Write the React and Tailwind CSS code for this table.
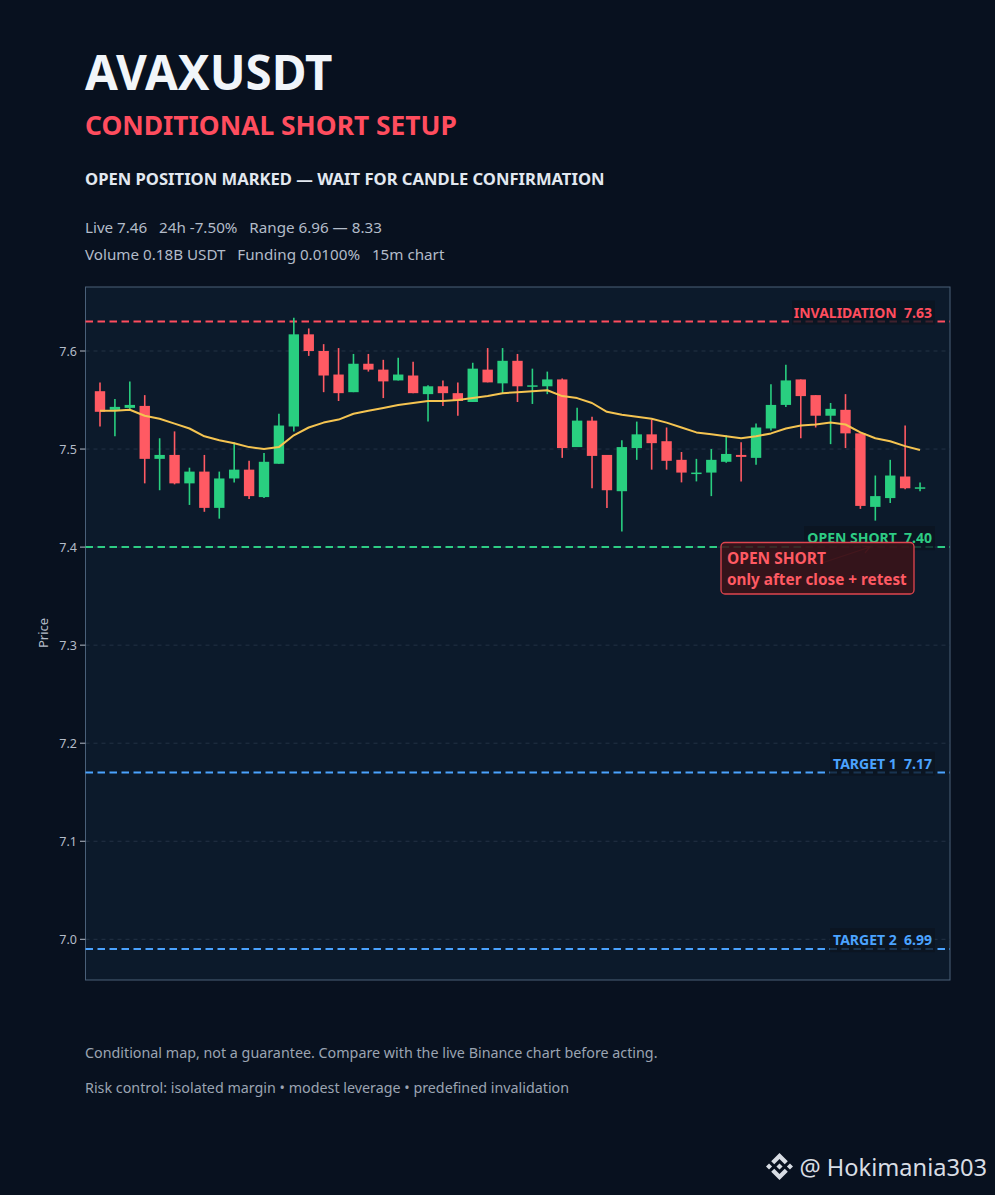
import React from "react";

// OHLC per 15m candle
const candles = [
  [7.559, 7.568, 7.523, 7.538], [7.54, 7.551, 7.513, 7.543], [7.542, 7.569, 7.54, 7.545],
  [7.544, 7.555, 7.465, 7.49], [7.49, 7.511, 7.458, 7.494], [7.494, 7.518, 7.464, 7.465],
  [7.465, 7.481, 7.443, 7.477], [7.477, 7.494, 7.436, 7.44], [7.44, 7.477, 7.429, 7.47],
  [7.47, 7.507, 7.466, 7.479], [7.479, 7.488, 7.449, 7.452], [7.451, 7.496, 7.45, 7.487],
  [7.485, 7.536, 7.485, 7.524], [7.523, 7.634, 7.518, 7.617], [7.617, 7.623, 7.595, 7.6],
  [7.6, 7.607, 7.558, 7.575], [7.576, 7.603, 7.549, 7.557], [7.558, 7.597, 7.558, 7.587],
  [7.587, 7.597, 7.579, 7.581], [7.581, 7.591, 7.552, 7.569], [7.57, 7.593, 7.57, 7.576],
  [7.575, 7.589, 7.557, 7.557], [7.556, 7.565, 7.528, 7.564], [7.564, 7.57, 7.544, 7.557],
  [7.557, 7.568, 7.534, 7.549], [7.548, 7.588, 7.548, 7.582], [7.581, 7.603, 7.568, 7.568],
  [7.567, 7.603, 7.557, 7.59], [7.59, 7.597, 7.548, 7.564], [7.564, 7.582, 7.546, 7.565],
  [7.564, 7.579, 7.556, 7.571], [7.571, 7.572, 7.491, 7.501], [7.502, 7.542, 7.502, 7.529],
  [7.529, 7.533, 7.46, 7.493], [7.494, 7.494, 7.44, 7.458], [7.457, 7.509, 7.416, 7.502],
  [7.501, 7.528, 7.489, 7.515], [7.515, 7.53, 7.479, 7.506], [7.508, 7.522, 7.479, 7.488],
  [7.489, 7.497, 7.466, 7.476], [7.475, 7.49, 7.467, 7.476], [7.476, 7.5, 7.452, 7.489],
  [7.487, 7.514, 7.486, 7.495], [7.494, 7.507, 7.467, 7.492], [7.491, 7.526, 7.484, 7.522],
  [7.521, 7.566, 7.519, 7.545], [7.545, 7.586, 7.543, 7.57], [7.571, 7.571, 7.511, 7.554],
  [7.555, 7.555, 7.522, 7.534], [7.534, 7.547, 7.505, 7.541], [7.54, 7.556, 7.501, 7.516],
  [7.516, 7.516, 7.439, 7.442], [7.441, 7.473, 7.427, 7.452], [7.45, 7.489, 7.445, 7.473],
  [7.472, 7.524, 7.459, 7.46], [7.46, 7.466, 7.457, 7.461],
];

const ma = [
  7.539, 7.539, 7.54, 7.534, 7.531, 7.526, 7.521, 7.513, 7.509, 7.506, 7.502, 7.5, 7.502, 7.514,
  7.522, 7.527, 7.53, 7.536, 7.539, 7.542, 7.545, 7.547, 7.549, 7.549, 7.55, 7.552, 7.554, 7.557,
  7.558, 7.559, 7.56, 7.554, 7.552, 7.547, 7.538, 7.535, 7.533, 7.531, 7.527, 7.522, 7.517, 7.515,
  7.513, 7.511, 7.513, 7.516, 7.521, 7.524, 7.525, 7.527, 7.525, 7.517, 7.511, 7.508, 7.503, 7.499,
];

const levels = [
  { label: "INVALIDATION", price: 7.63, color: "#ff4d5e", boxX: 792 },
  { label: "OPEN SHORT", price: 7.4, color: "#2ecc84", boxX: 804 },
  { label: "TARGET 1", price: 7.17, color: "#4ba3ff", boxX: 830 },
  { label: "TARGET 2", price: 6.99, color: "#4ba3ff", boxX: 830 },
];

const ticks = [7.6, 7.5, 7.4, 7.3, 7.2, 7.1, 7.0];

const L = 85.5;
const R = 950;
const y = (p) => 351 + (7.6 - p) * 980.5;
const x = (i) => 100 + i * 14.91;

function Chart() {
  const maPath = ma.map((v, i) => `${i ? "L" : "M"}${x(i).toFixed(1)} ${y(v).toFixed(1)}`).join(" ");
  return (
    <svg width="995" height="701" viewBox="0 284 995 701" className="block" fontFamily="'Noto Sans', sans-serif">
      <rect x={L} y={287} width={R - L} height={693} fill="#0c1a2b" stroke="#4a6079" strokeWidth="1" />

      {ticks.map((t) => (
        <g key={t}>
          <line x1={L} x2={R} y1={y(t)} y2={y(t)} stroke="#233245" strokeWidth="1" strokeDasharray="4 4" />
          <line x1={80} x2={L} y1={y(t)} y2={y(t)} stroke="#b4bcc8" strokeWidth="1" />
          <text x={77} y={y(t) + 4.5} textAnchor="end" fontSize="12.5" fill="#b4bcc8">
            {t.toFixed(1)}
          </text>
        </g>
      ))}
      <text x={48} y={633} fontSize="13" fill="#b4bcc8" textAnchor="middle" transform="rotate(-90 48 633)">
        Price
      </text>

      {levels.map((l) => (
        <line key={l.label} x1={L} x2={R} y1={y(l.price)} y2={y(l.price)} stroke={l.color} strokeWidth="2" strokeDasharray="7.5 4.5" />
      ))}

      {candles.map(([o, h, lo, c], i) => {
        const up = c >= o;
        const col = up ? "#29cf80" : "#ff5a63";
        const top = y(Math.max(o, c));
        const bh = Math.max(y(Math.min(o, c)) - top, 1.5);
        return (
          <g key={i}>
            <line x1={x(i)} x2={x(i)} y1={y(h)} y2={y(lo)} stroke={col} strokeWidth="1.6" />
            <rect x={x(i) - 5.2} y={top} width="10.4" height={bh} fill={col} />
          </g>
        );
      })}

      <path d={maPath} fill="none" stroke="#f5c451" strokeWidth="2" strokeLinejoin="round" />

      {levels.map((l) => {
        const by = y(l.price);
        return (
          <g key={l.label + "t"}>
            <rect x={l.boxX} y={by - 21} width={935 - l.boxX} height="24" fill="#0b1420" opacity="0.78" />
            <text x={932} y={by - 4} textAnchor="end" fontSize="14" fontWeight="700" fill={l.color}>
              {`${l.label}\u00a0\u00a0${l.price.toFixed(2)}`}
            </text>
          </g>
        );
      })}

      <g stroke="#8a2e38" strokeWidth="1.2" fill="none">
        <line x1={822} y1={563} x2={870} y2={547} />
        <path d="M862 546 L870 547 L865 553" />
      </g>
      <rect x={721} y={542.5} width={193} height={51.5} rx="4" fill="#3a1319" fillOpacity="0.88" stroke="#e0454f" strokeWidth="1.3" />
      <text x={727} y={564} fontSize="15.5" fontWeight="700" fill="#ff5a63">OPEN SHORT</text>
      <text x={727} y={585} fontSize="15.3" fontWeight="700" fill="#ff5a63">only after close + retest</text>
    </svg>
  );
}

function BinanceLogo() {
  return (
    <svg width="27" height="27" viewBox="0 0 126.61 126.61" fill="#d8dde4">
      <path d="M38.73 53.2l24.59-24.58 24.6 24.6 14.3-14.31L63.32 0 24.42 38.9l14.31 14.3zM0 63.31l14.3-14.31 14.31 14.31-14.31 14.3zM38.73 73.41l24.59 24.59 24.6-24.6 14.31 14.29-38.9 38.91-38.91-38.88-.02-.02 14.33-14.29zM97.99 63.31l14.3-14.31 14.32 14.3-14.31 14.32zM77.83 63.3L63.32 48.78 52.59 59.51l-1.24 1.23-2.54 2.54 14.51 14.5 14.51-14.47z" />
    </svg>
  );
}

export default function App() {
  return (
    <div className="w-[995px] h-[1195px] bg-[#08111f] font-['Noto_Sans',sans-serif] overflow-hidden">
      <div className="px-[85px] pt-[48px]">
        <h1 className="text-[47.5px] leading-[47.5px] font-bold text-[#f1f5f9]">AVAXUSDT</h1>
        <h2 className="mt-[13px] text-[26.4px] leading-[32px] font-bold text-[#ff4d5e]">CONDITIONAL SHORT SETUP</h2>
        <p className="mt-[28px] text-[16.6px] leading-[20px] font-bold text-[#e2e8f0]">
          OPEN POSITION MARKED — WAIT FOR CANDLE CONFIRMATION
        </p>
        <div className="mt-[25px] text-[15.2px] leading-[27px] text-[#b3bcc9] whitespace-pre">
          <p>Live 7.46   24h -7.50%   Range 6.96 — 8.33</p>
          <p>Volume 0.18B USDT   Funding 0.0100%   15m chart</p>
        </div>
      </div>

      <div className="mt-[16px]">
        <Chart />
      </div>

      <div className="px-[85px] mt-[50px] text-[14.3px] leading-[35px] text-[#9ba4b2]">
        <p>Conditional map, not a guarantee. Compare with the live Binance chart before acting.</p>
        <p>Risk control: isolated margin • modest leverage • predefined invalidation</p>
      </div>

      <div className="mt-[48px] pr-[8px] flex items-center justify-end gap-[7px] text-[23.6px] leading-[28px] text-[#d8dde4]">
        <BinanceLogo />
        <span>@ Hokimania303</span>
      </div>
    </div>
  );
}
